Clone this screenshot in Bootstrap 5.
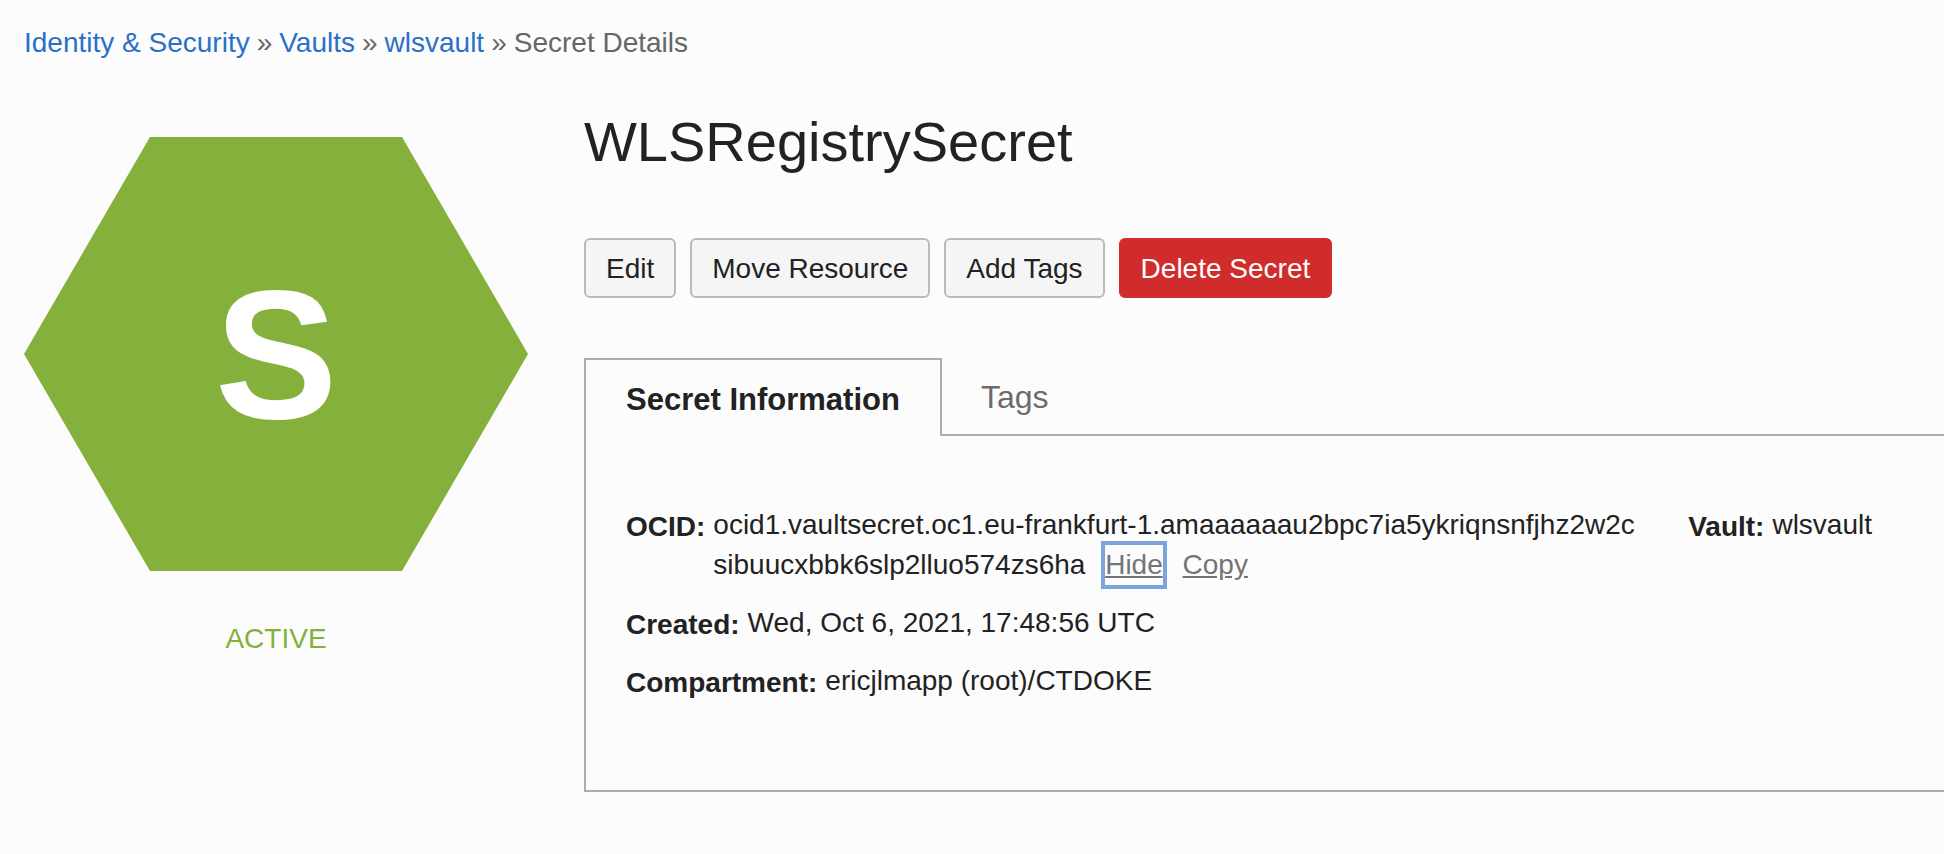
<!DOCTYPE html>
<html lang="en">
<head>
<meta charset="utf-8">
<meta name="viewport" content="width=device-width, initial-scale=1">
<title>Secret Details</title>
<link href="https://cdn.jsdelivr.net/npm/bootstrap@5.3.0/dist/css/bootstrap.min.css" rel="stylesheet">
<style>
  body {
    background: #fcfcfc;
    color: #222;
    font-family: "Liberation Sans", Arial, sans-serif;
    font-size: 28px;
    line-height: 40px;
  }
  .page { padding: 23px 0 60px 24px; }
  .trail { --bs-breadcrumb-divider: "»"; --bs-breadcrumb-item-padding-x: 7px; --bs-breadcrumb-divider-color: #666; --bs-breadcrumb-font-size: 28px; }
  .trail a { color: #2a70c8; text-decoration: none; }
  .trail .active { color: #666; }
  .layout { gap: 56px; margin-top: 45px; }
  .side { flex: 0 0 504px; padding-top: 29px; }
  .hexagon {
    aspect-ratio: 504 / 434;
    background: #85b03c;
    clip-path: polygon(25% 0, 75% 0, 100% 50%, 75% 100%, 25% 100%, 0 50%);
    font-size: 184px;
    line-height: 1;
  }
  .status { color: #85b03c; margin-top: 48px; }
  .main-col { min-width: 0; }
  .title { font-size: 56px; line-height: 68px; }
  .actions { gap: 14px; margin: 62px 0 60px; }
  .actions .btn {
    --bs-btn-font-size: 28px;
    --bs-btn-line-height: 40px;
    --bs-btn-padding-x: 20px;
    border-width: 2px;
    border-radius: 6px;
    padding-top: 9px;
    padding-bottom: 7px;
  }
  .btn-plain { --bs-btn-color: #222; --bs-btn-bg: #f5f5f5; --bs-btn-border-color: #b6bbc1; }
  .actions .btn-danger { --bs-btn-bg: #d12c2c; --bs-btn-border-color: #d12c2c; }
  .tabs button { background: none; border: 0; color: #222; font-size: 32px; }
  .tabs .tab-on { border: 2px solid #adadad; border-bottom: 0; font-size: 31px; font-weight: 700; padding: 20px 40px 16px; }
  .tabs .tab-off { color: #6b6b6b; padding: 19px 39px 17px; }
  .tabs .tab-rest { border-bottom: 2px solid #adadad; }
  .panel { border: solid #adadad; border-width: 0 0 2px 2px; padding: 69px 72px 89px 40px; gap: 40px; }
  .panel dl { display: grid; gap: 18px; align-content: start; }
  .panel dl > div { display: flex; gap: 8px; }
  .panel dt { flex: none; padding-top: 2px; margin-bottom: -2px; font-weight: 700; }
  .panel dd { margin: 0; word-break: break-all; }
  .panel dd a { color: #757575; display: inline-block; vertical-align: top; margin-left: 12px; word-break: normal; }
  .panel dd a.focused { outline: 4px solid #7ba3dc; }
</style>
</head>
<body>
<div class="page">
  <nav aria-label="breadcrumb">
    <ol class="breadcrumb trail mb-0">
      <li class="breadcrumb-item"><a href="#">Identity &amp; Security</a></li>
      <li class="breadcrumb-item"><a href="#">Vaults</a></li>
      <li class="breadcrumb-item"><a href="#">wlsvault</a></li>
      <li class="breadcrumb-item active" aria-current="page">Secret Details</li>
    </ol>
  </nav>
  <div class="layout d-flex">
    <aside class="side text-center">
      <div class="hexagon d-flex align-items-center justify-content-center text-white fw-bold">S</div>
      <div class="status">ACTIVE</div>
    </aside>
    <main class="main-col flex-grow-1">
      <h1 class="title fw-normal mb-0">WLSRegistrySecret</h1>
      <div class="actions d-flex flex-wrap">
        <button type="button" class="btn btn-plain">Edit</button>
        <button type="button" class="btn btn-plain">Move Resource</button>
        <button type="button" class="btn btn-plain">Add Tags</button>
        <button type="button" class="btn btn-danger">Delete Secret</button>
      </div>
      <div class="tabs d-flex" role="tablist">
        <button type="button" class="tab-on" role="tab" aria-selected="true">Secret Information</button>
        <div class="tab-rest flex-grow-1" role="presentation">
          <button type="button" class="tab-off" role="tab" aria-selected="false">Tags</button>
        </div>
      </div>
      <section class="panel d-flex" role="tabpanel">
        <dl class="mb-0 flex-grow-1">
          <div>
            <dt>OCID:</dt>
            <dd>ocid1.vaultsecret.oc1.eu-frankfurt-1.amaaaaaau2bpc7ia5ykriqnsnfjhz2w2csibuucxbbk6slp2lluo574zs6ha <a class="focused" href="#">Hide</a> <a href="#">Copy</a></dd>
          </div>
          <div><dt>Created:</dt><dd>Wed, Oct 6, 2021, 17:48:56 UTC</dd></div>
          <div><dt>Compartment:</dt><dd>ericjlmapp (root)/CTDOKE</dd></div>
        </dl>
        <dl class="mb-0 flex-shrink-0">
          <div><dt>Vault:</dt><dd>wlsvault</dd></div>
        </dl>
      </section>
    </main>
  </div>
</div>
<script src="https://cdn.jsdelivr.net/npm/bootstrap@5.3.0/dist/js/bootstrap.bundle.min.js"></script>
</body>
</html>
